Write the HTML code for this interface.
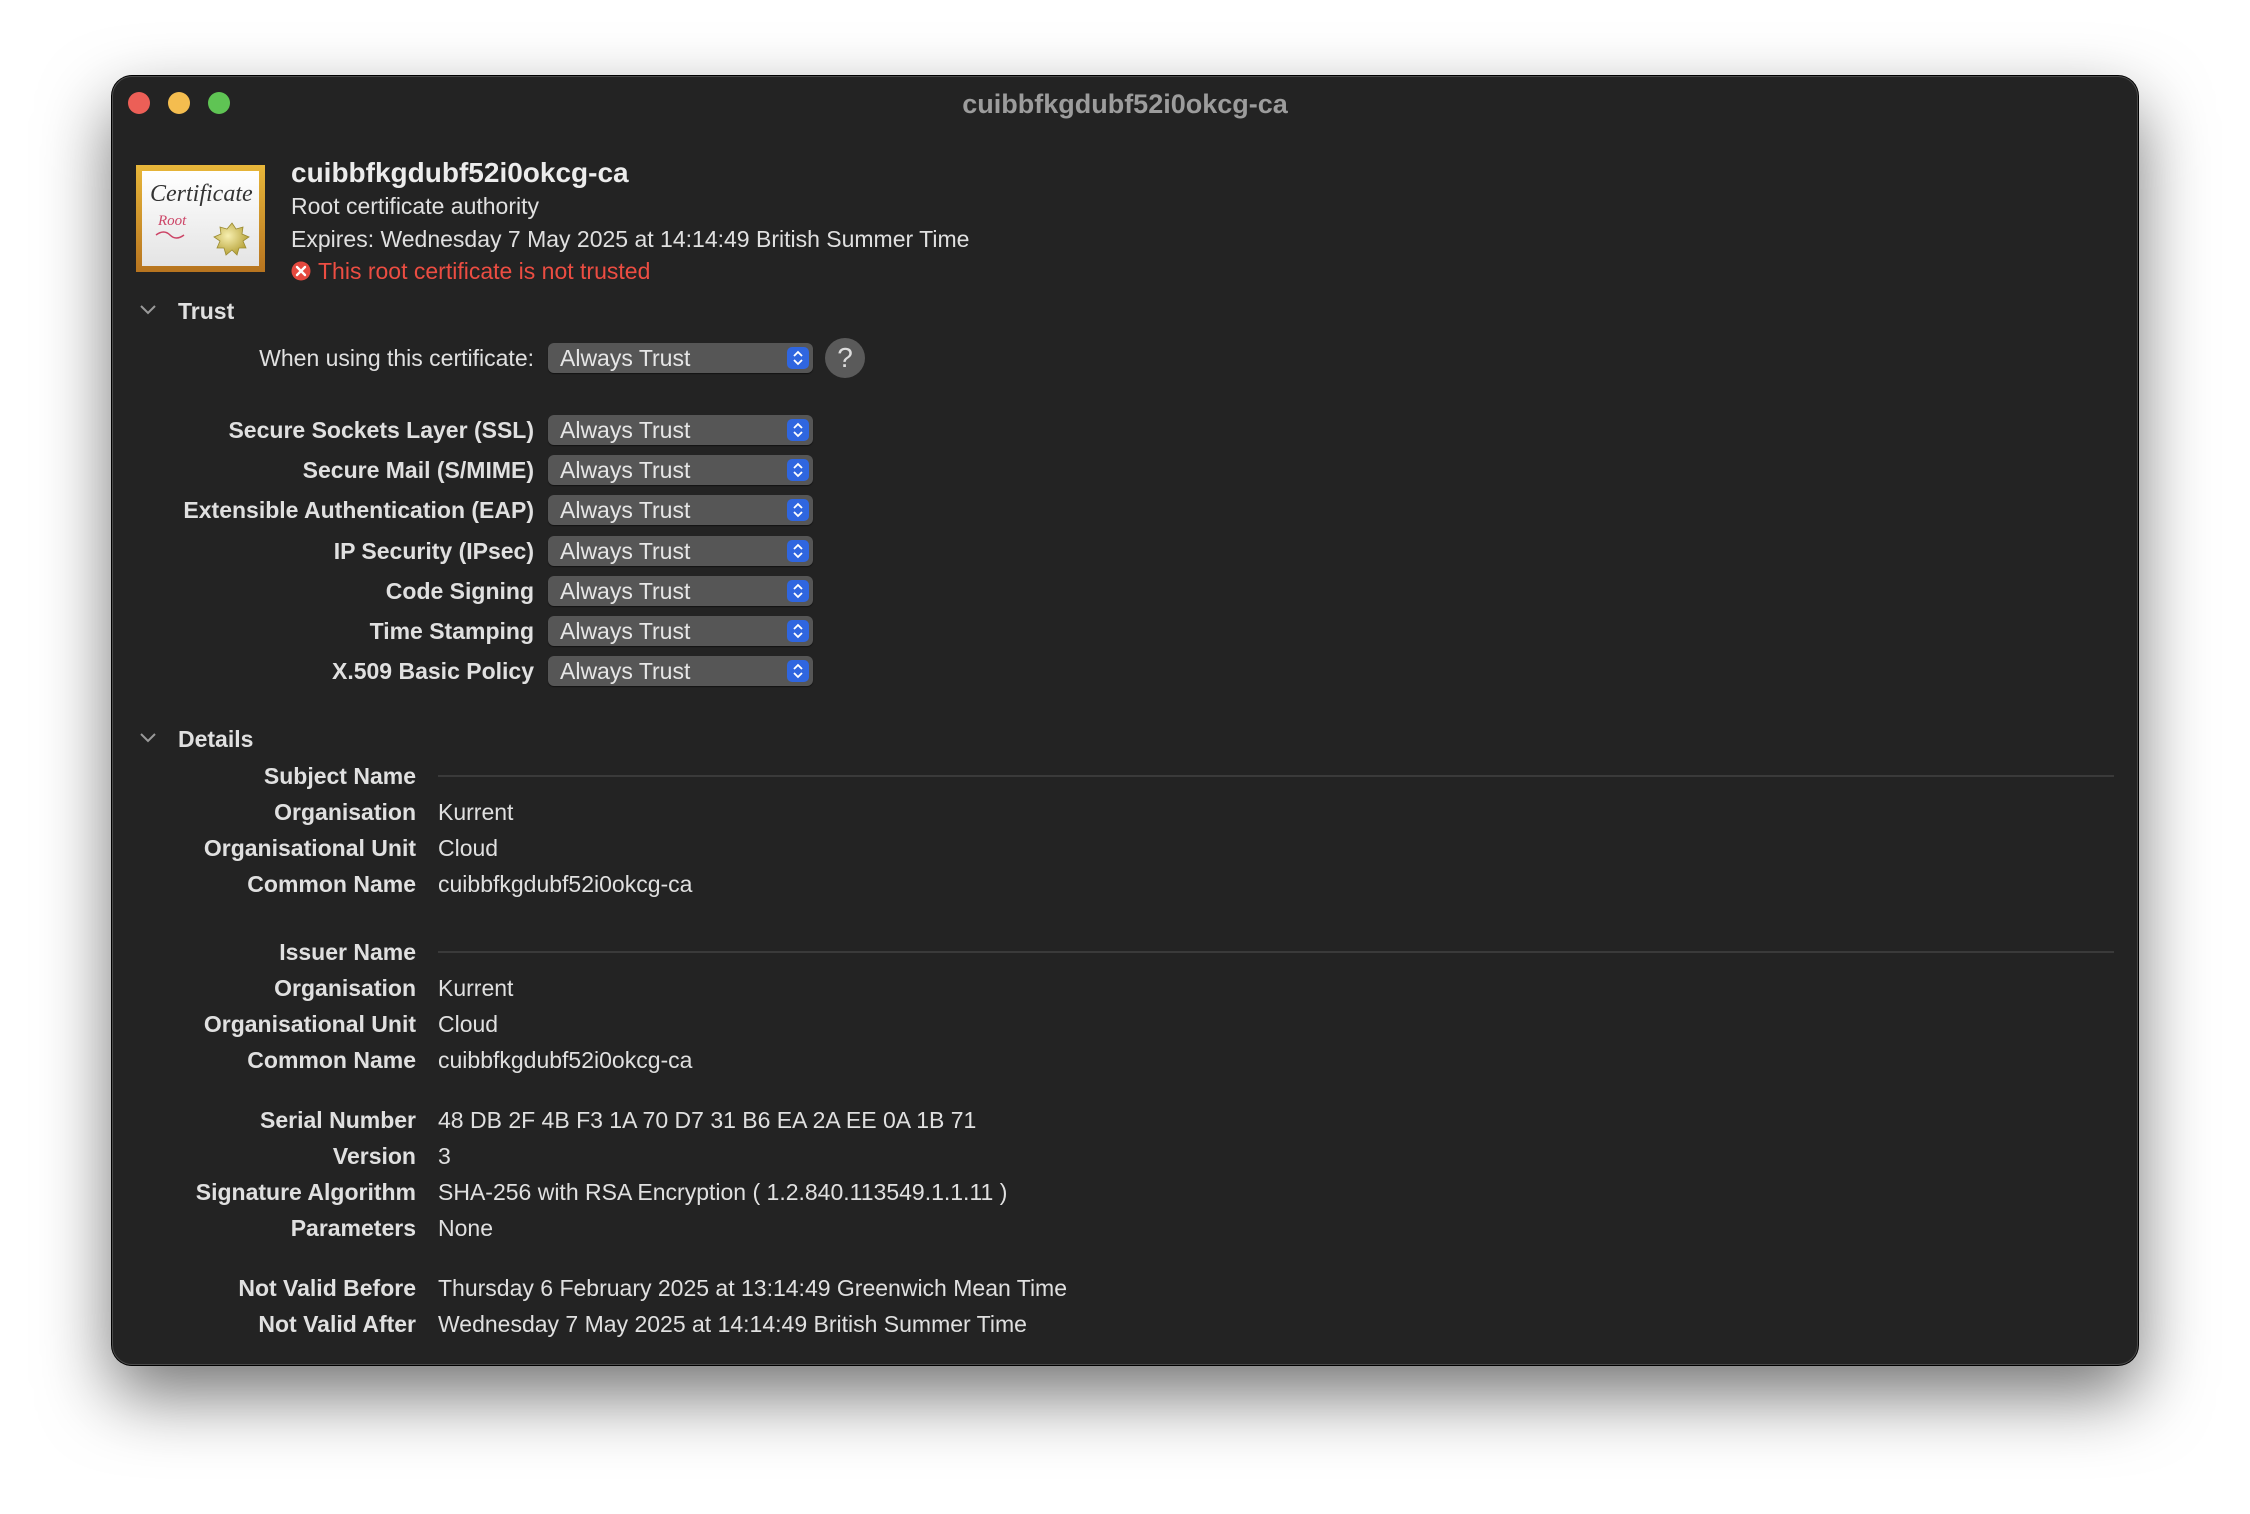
<!DOCTYPE html>
<html><head><meta charset="utf-8"><style>
*{margin:0;padding:0;box-sizing:border-box}
body{width:2250px;height:1514px;background:#fff;position:relative;overflow:hidden;font-family:"Liberation Sans",sans-serif;color:#e0e0e0}
.win{position:absolute;left:112px;top:76px;width:2026px;height:1289px;background:#232323;border-radius:20px;border:1px solid #4a4a4a;box-shadow:0 30px 70px rgba(0,0,0,.55),0 0 0 1px #000}
.a{position:absolute;white-space:nowrap;line-height:30px;font-size:23px;margin-top:1px}
.b{font-weight:bold}
.r{text-align:right}
.dot{position:absolute;top:92px;width:22px;height:22px;border-radius:50%}
.pop{position:absolute;left:548px;width:265px;height:30px;background:#565656;border-radius:6px;box-shadow:0 1px 1px rgba(0,0,0,.5);font-size:23px;line-height:30px;padding-left:12px;color:#e6e6e6}
.pop i{position:absolute;right:4px;top:4px;width:22px;height:22px;background:#2f66e0;border-radius:5px}
.pop i svg{position:absolute;left:5px;top:3px}
.line{position:absolute;left:438px;width:1676px;height:2px;background:#3a3a3a}
</style></head><body>
<div class="win"></div>
<div class="dot" style="left:128px;background:#ec5f57"></div>
<div class="dot" style="left:168px;background:#f4bd4f"></div>
<div class="dot" style="left:208px;background:#5fc454"></div>
<div class="a b" style="left:0;width:2250px;text-align:center;top:88px;font-size:27px;color:#9c9c9c">cuibbfkgdubf52i0okcg-ca</div>

<svg style="position:absolute;left:136px;top:165px" width="129" height="107" viewBox="0 0 129 107">
<defs><linearGradient id="g" x1="0" y1="0" x2="0" y2="1"><stop offset="0" stop-color="#e8b73a"/><stop offset="1" stop-color="#b7741f"/></linearGradient>
<radialGradient id="s" cx=".4" cy=".4" r=".6"><stop offset="0" stop-color="#f7efb0"/><stop offset="1" stop-color="#b8a43c"/></radialGradient>
<linearGradient id="p" x1="0" y1="0" x2="0" y2="1"><stop offset="0" stop-color="#fff"/><stop offset="1" stop-color="#e4e4e4"/></linearGradient></defs>
<rect width="129" height="107" fill="url(#g)"/>
<rect x="6" y="6" width="117" height="95" fill="url(#p)"/>
<text x="14" y="36" font-family="Liberation Serif" font-style="italic" font-size="24" fill="#333">Certificate</text>
<text x="22" y="60" font-family="Liberation Serif" font-style="italic" font-size="15" fill="#c46">Root</text>
<path d="M20 70 q8-6 14 0 q6 6 14 0" stroke="#c46" fill="none" stroke-width="1.5"/>
<polygon points="96,58 100,64 107,62 106,69 113,72 107,76 110,83 103,83 101,90 96,85 90,90 88,83 81,83 84,76 78,72 85,69 84,62 91,64" fill="url(#s)" stroke="#9a8a30" stroke-width=".8"/>
</svg>

<div class="a b" style="left:291px;top:157px;font-size:28px;color:#ececec">cuibbfkgdubf52i0okcg-ca</div>
<div class="a" style="left:291px;top:190px">Root certificate authority</div>
<div class="a" style="left:291px;top:223px">Expires: Wednesday 7 May 2025 at 14:14:49 British Summer Time</div>
<svg style="position:absolute;left:291px;top:261px" width="20" height="20" viewBox="0 0 20 20"><circle cx="10" cy="10" r="9.5" fill="#e5493f"/><path d="M6 6L14 14M14 6L6 14" stroke="#fff" stroke-width="2.4" stroke-linecap="round"/></svg>
<div class="a" style="left:318px;top:255px;color:#ec4d42">This root certificate is not trusted</div>

<svg style="position:absolute;left:139px;top:304px" width="18" height="12" viewBox="0 0 18 12"><path d="M2 2L9 9L16 2" stroke="#9a9a9a" stroke-width="2" fill="none"/></svg>
<div class="a b" style="left:178px;top:295px">Trust</div>

<div class="a r" style="left:0;width:534px;top:342px">When using this certificate:</div>
<div class="pop" style="top:343px">Always Trust<i><svg width="12" height="16" viewBox="0 0 12 16"><path d="M2 6L6 2L10 6M2 10L6 14L10 10" stroke="#fff" stroke-width="1.8" fill="none"/></svg></i></div>
<div style="position:absolute;left:825px;top:338px;width:40px;height:40px;border-radius:50%;background:#5a5a5a;color:#ddd;font-size:28px;line-height:40px;text-align:center">?</div>

<div class="a b r" style="left:0;width:534px;top:414px">Secure Sockets Layer (SSL)</div>
<div class="a b r" style="left:0;width:534px;top:454px">Secure Mail (S/MIME)</div>
<div class="a b r" style="left:0;width:534px;top:494px">Extensible Authentication (EAP)</div>
<div class="a b r" style="left:0;width:534px;top:535px">IP Security (IPsec)</div>
<div class="a b r" style="left:0;width:534px;top:575px">Code Signing</div>
<div class="a b r" style="left:0;width:534px;top:615px">Time Stamping</div>
<div class="a b r" style="left:0;width:534px;top:655px">X.509 Basic Policy</div>
<div class="pop" style="top:415px">Always Trust<i><svg width="12" height="16" viewBox="0 0 12 16"><path d="M2 6L6 2L10 6M2 10L6 14L10 10" stroke="#fff" stroke-width="1.8" fill="none"/></svg></i></div>
<div class="pop" style="top:455px">Always Trust<i><svg width="12" height="16" viewBox="0 0 12 16"><path d="M2 6L6 2L10 6M2 10L6 14L10 10" stroke="#fff" stroke-width="1.8" fill="none"/></svg></i></div>
<div class="pop" style="top:495px">Always Trust<i><svg width="12" height="16" viewBox="0 0 12 16"><path d="M2 6L6 2L10 6M2 10L6 14L10 10" stroke="#fff" stroke-width="1.8" fill="none"/></svg></i></div>
<div class="pop" style="top:536px">Always Trust<i><svg width="12" height="16" viewBox="0 0 12 16"><path d="M2 6L6 2L10 6M2 10L6 14L10 10" stroke="#fff" stroke-width="1.8" fill="none"/></svg></i></div>
<div class="pop" style="top:576px">Always Trust<i><svg width="12" height="16" viewBox="0 0 12 16"><path d="M2 6L6 2L10 6M2 10L6 14L10 10" stroke="#fff" stroke-width="1.8" fill="none"/></svg></i></div>
<div class="pop" style="top:616px">Always Trust<i><svg width="12" height="16" viewBox="0 0 12 16"><path d="M2 6L6 2L10 6M2 10L6 14L10 10" stroke="#fff" stroke-width="1.8" fill="none"/></svg></i></div>
<div class="pop" style="top:656px">Always Trust<i><svg width="12" height="16" viewBox="0 0 12 16"><path d="M2 6L6 2L10 6M2 10L6 14L10 10" stroke="#fff" stroke-width="1.8" fill="none"/></svg></i></div>

<svg style="position:absolute;left:139px;top:732px" width="18" height="12" viewBox="0 0 18 12"><path d="M2 2L9 9L16 2" stroke="#9a9a9a" stroke-width="2" fill="none"/></svg>
<div class="a b" style="left:178px;top:723px">Details</div>

<div class="a b r" style="left:0;width:416px;top:760px">Subject Name</div><div class="line" style="top:775px"></div>
<div class="a b r" style="left:0;width:416px;top:796px">Organisation</div><div class="a" style="left:438px;top:796px">Kurrent</div>
<div class="a b r" style="left:0;width:416px;top:832px">Organisational Unit</div><div class="a" style="left:438px;top:832px">Cloud</div>
<div class="a b r" style="left:0;width:416px;top:868px">Common Name</div><div class="a" style="left:438px;top:868px">cuibbfkgdubf52i0okcg-ca</div>

<div class="a b r" style="left:0;width:416px;top:936px">Issuer Name</div><div class="line" style="top:951px"></div>
<div class="a b r" style="left:0;width:416px;top:972px">Organisation</div><div class="a" style="left:438px;top:972px">Kurrent</div>
<div class="a b r" style="left:0;width:416px;top:1008px">Organisational Unit</div><div class="a" style="left:438px;top:1008px">Cloud</div>
<div class="a b r" style="left:0;width:416px;top:1044px">Common Name</div><div class="a" style="left:438px;top:1044px">cuibbfkgdubf52i0okcg-ca</div>

<div class="a b r" style="left:0;width:416px;top:1104px">Serial Number</div><div class="a" style="left:438px;top:1104px">48 DB 2F 4B F3 1A 70 D7 31 B6 EA 2A EE 0A 1B 71</div>
<div class="a b r" style="left:0;width:416px;top:1140px">Version</div><div class="a" style="left:438px;top:1140px">3</div>
<div class="a b r" style="left:0;width:416px;top:1176px">Signature Algorithm</div><div class="a" style="left:438px;top:1176px">SHA-256 with RSA Encryption ( 1.2.840.113549.1.1.11 )</div>
<div class="a b r" style="left:0;width:416px;top:1212px">Parameters</div><div class="a" style="left:438px;top:1212px">None</div>

<div class="a b r" style="left:0;width:416px;top:1272px">Not Valid Before</div><div class="a" style="left:438px;top:1272px">Thursday 6 February 2025 at 13:14:49 Greenwich Mean Time</div>
<div class="a b r" style="left:0;width:416px;top:1308px">Not Valid After</div><div class="a" style="left:438px;top:1308px">Wednesday 7 May 2025 at 14:14:49 British Summer Time</div>
</body></html>
